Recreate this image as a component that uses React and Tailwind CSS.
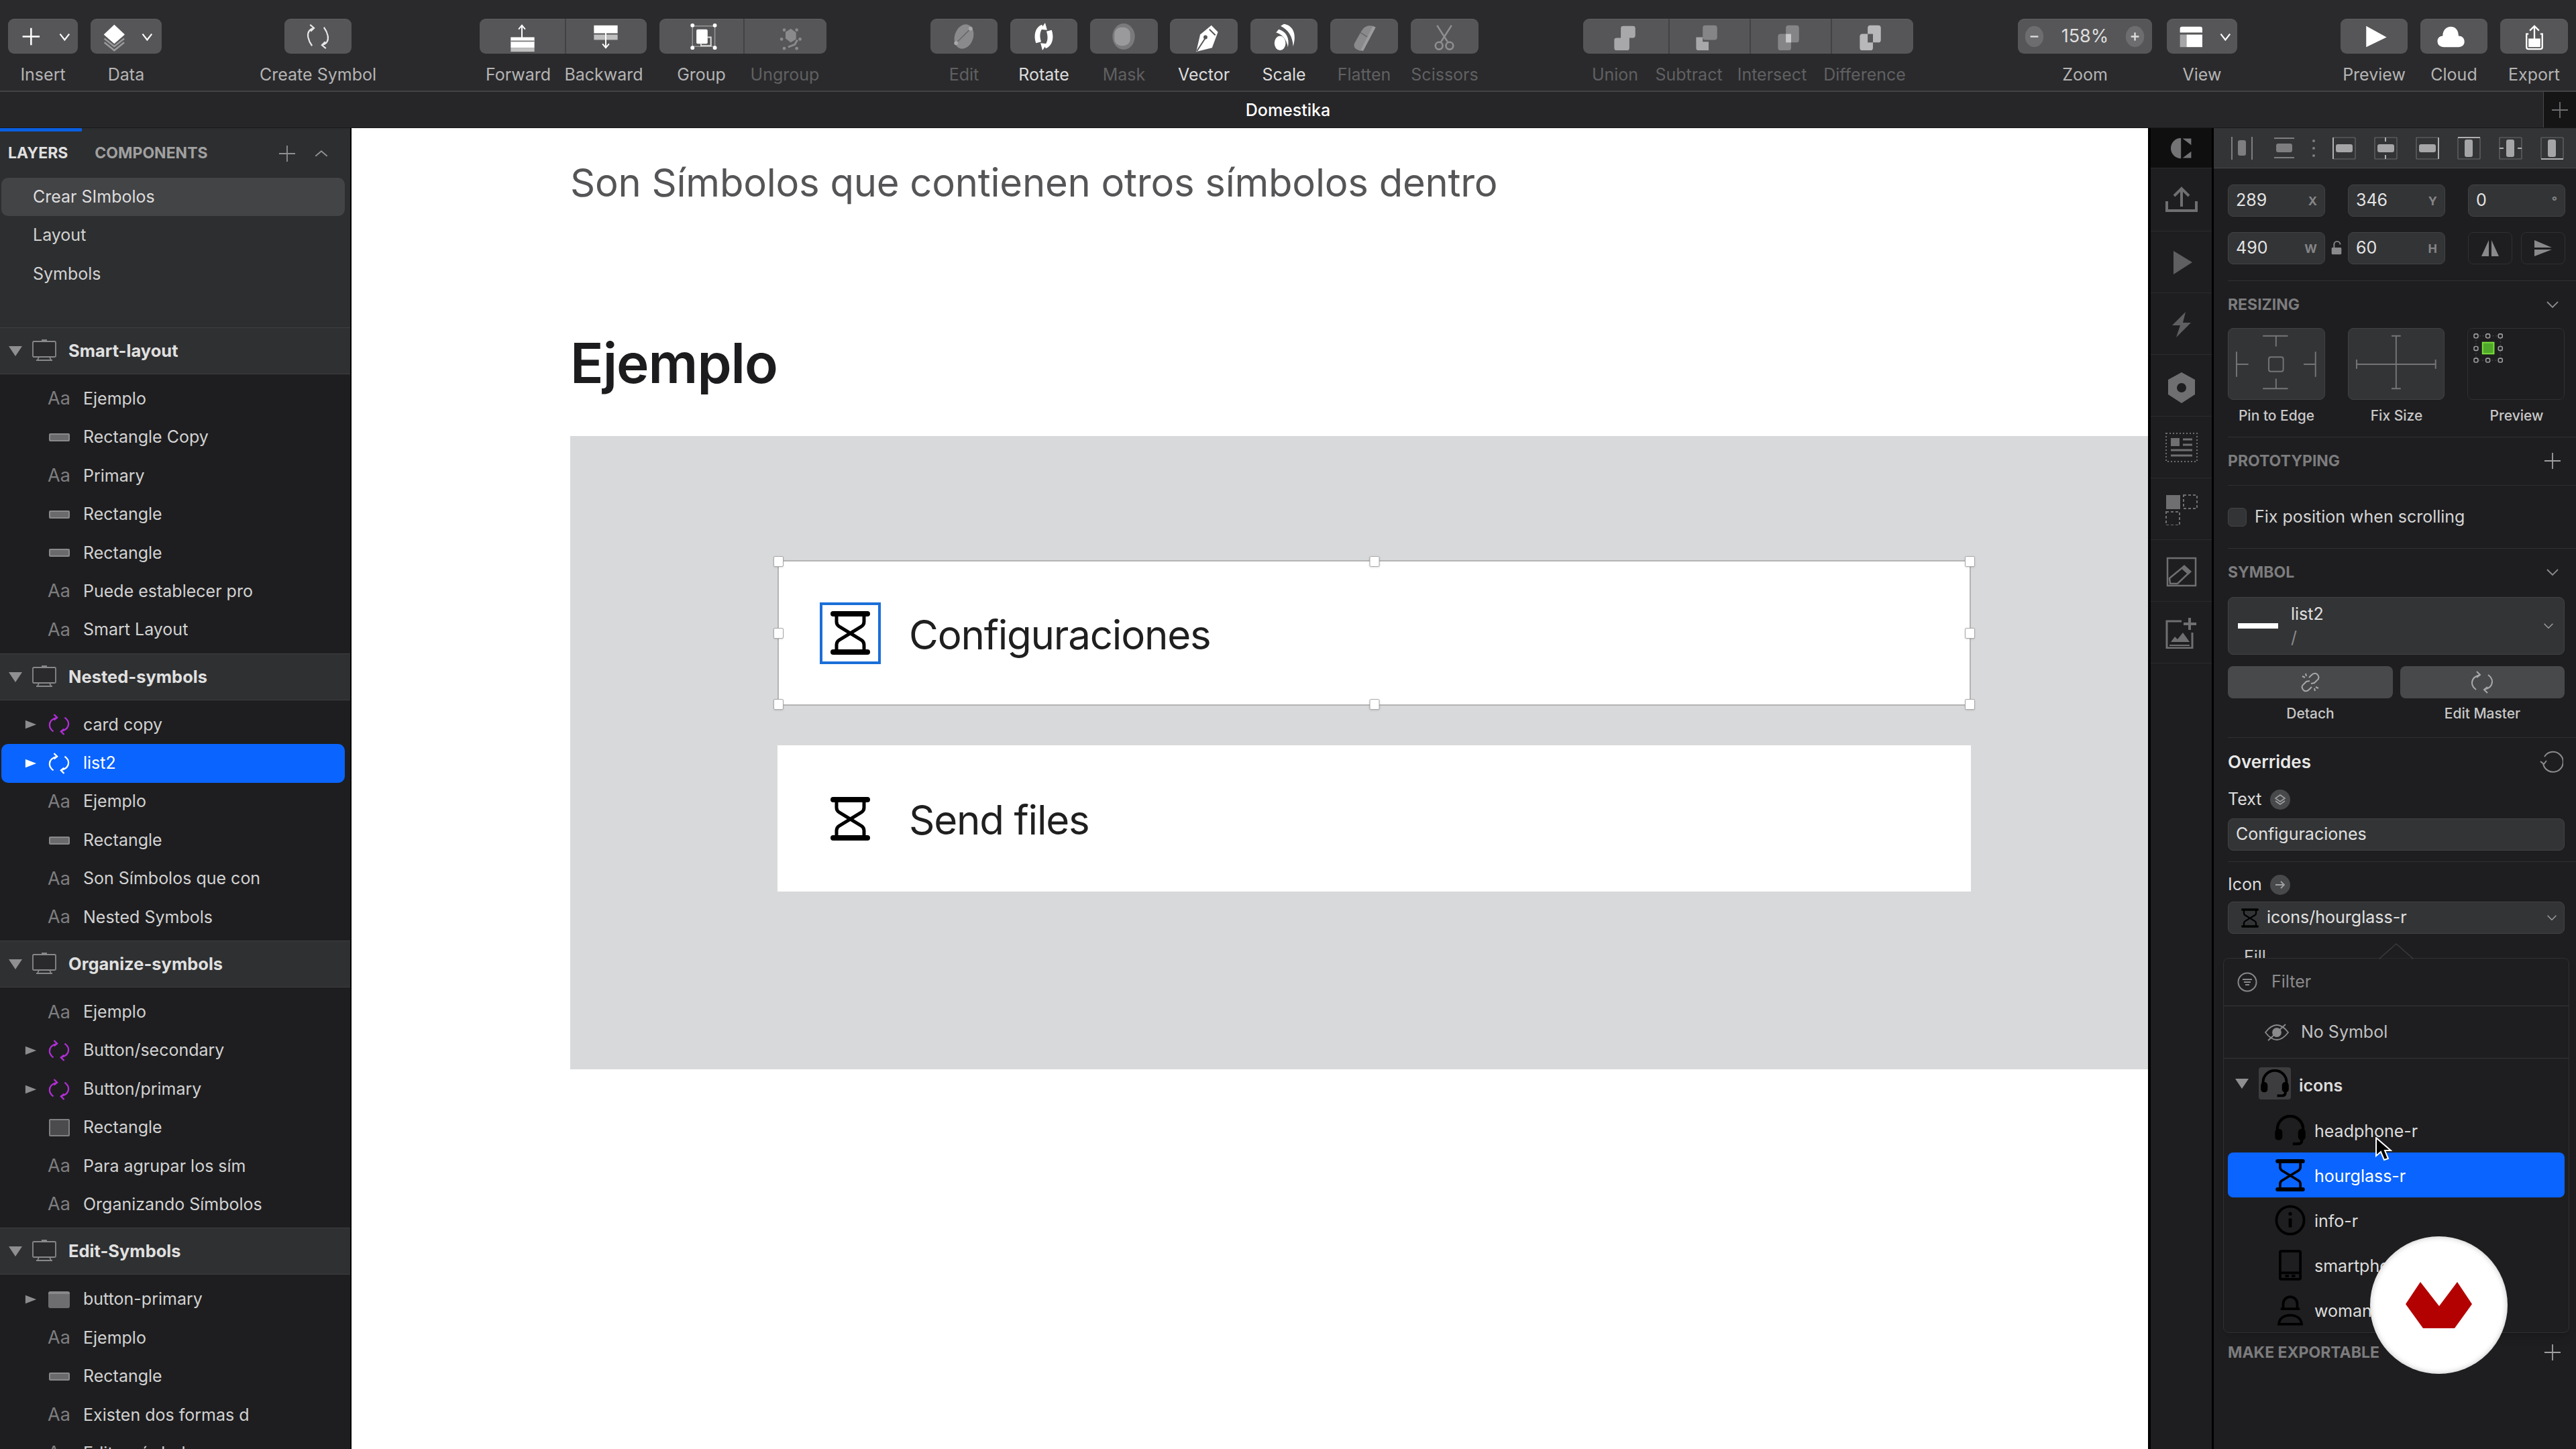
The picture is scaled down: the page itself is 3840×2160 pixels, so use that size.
import React from "react";

// ---------- drawings ----------
const Hourglass = ({ className = "" }) => (
  <svg viewBox="0 0 59 65" className={className}>
    <rect x="0" y="0" width="59" height="8" rx="4" fill="currentColor" />
    <rect x="0" y="57" width="59" height="8" rx="4" fill="currentColor" />
    <path d="M9 6v10c0 3 1 5 4 7l33 20c3 2 4 4 4 7v9M50 6v10c0 3-1 5-4 7L13 43c-3 2-4 4-4 7v9" fill="none" stroke="currentColor" strokeWidth="5" />
  </svg>
);

const Headphone = ({ className = "" }) => (
  <svg viewBox="0 0 48 48" className={className} fill="none" stroke="currentColor" strokeWidth="4.5">
    <path d="M4 30V22a20 20 0 0 1 40 0v8" />
    <rect x="2.5" y="24" width="7" height="13" rx="3" fill="currentColor" />
    <rect x="38.5" y="24" width="7" height="13" rx="3" fill="currentColor" />
    <path d="M42 37v3c0 4-3 5-6 5h-8" />
  </svg>
);

const InfoIcon = ({ className = "" }) => (
  <svg viewBox="0 0 48 48" className={className} fill="none" stroke="currentColor" strokeWidth="4">
    <circle cx="24" cy="24" r="21.5" />
    <path d="M24 21v14" strokeWidth="5" />
    <circle cx="24" cy="14" r="2.8" fill="currentColor" stroke="none" />
  </svg>
);

const PhoneIcon = ({ className = "" }) => (
  <svg viewBox="0 0 36 48" className={className} fill="none" stroke="currentColor" strokeWidth="4">
    <rect x="2" y="2" width="32" height="44" rx="2" />
    <path d="M2 36h32M10 41h6M20 41h6" />
  </svg>
);

const WomanIcon = ({ className = "" }) => (
  <svg viewBox="0 0 40 48" className={className} fill="none" stroke="currentColor" strokeWidth="4">
    <path d="M9 22V14a11 11 0 0 1 22 0v8" />
    <path d="M5 22h30" />
    <path d="M2 46c1-9 8-14 18-14s17 5 18 14z" />
  </svg>
);

const Chevron = ({ className = "", up = false }) => (
  <svg viewBox="0 0 20 12" className={className} fill="none" stroke="currentColor" strokeWidth="1.8">
    <path d={up ? "M2 10l8-7 8 7" : "M2 2l8 8 8-8"} />
  </svg>
);

const Plus = ({ className = "" }) => (
  <svg viewBox="0 0 26 26" className={className} fill="none" stroke="currentColor" strokeWidth="1.8">
    <path d="M13 1v24M1 13h24" />
  </svg>
);

const Triangle = ({ right = false, className = "" }) => (
  <svg viewBox="0 0 20 20" className={className} fill="currentColor">
    <path d={right ? "M1 3l18 7-18 7z" : "M0 3h20l-10 15z"} />
  </svg>
);

const SymbolArrows = ({ className = "", strokeWidth = 2.4 }) => (
  <svg viewBox="0 0 34 34" className={className} fill="none" stroke="currentColor" strokeWidth={strokeWidth}>
    <path d="M14 6C6 8 2 12 2 18c0 4 2 7 6 10" />
    <path d="M9 1l5 5-5 4" />
    <path d="M20 28c8-2 12-6 12-12 0-4-2-7-6-10" />
    <path d="M25 33l-5-5 5-4" />
  </svg>
);

const Monitor = ({ className = "" }) => (
  <svg viewBox="0 0 40 34" className={className} fill="none" stroke="currentColor" strokeWidth="1.8">
    <rect x="3" y="3" width="34" height="23" rx="1.5" fill="#2a2a2c" />
    <path d="M12 26l-2 5M28 26l2 5M8 31h24M16 1h8" />
  </svg>
);

const AlignIcon = ({ kind, className = "" }) => {
  const c = "#7e7e80";
  const box = <rect x="1" y="1" width="33" height="32" rx="1" fill="none" stroke="#6a6a6c" strokeWidth="1.2" />;
  if (kind === "h") return (
    <svg viewBox="0 0 34 34" className={`h-[34px] w-[34px] ${className}`}><path d="M2 0v34M32 0v34" stroke={c} strokeWidth="2" /><rect x="11" y="5" width="12" height="23" rx="3" fill={c} /></svg>
  );
  if (kind === "v") return (
    <svg viewBox="0 0 34 34" className={`h-[34px] w-[34px] ${className}`}><path d="M2 2h30M2 31h30" stroke={c} strokeWidth="2" /><rect x="5" y="10" width="24" height="13" rx="3" fill={c} /></svg>
  );
  if (kind === "dots") return (
    <svg viewBox="0 0 8 34" className={`h-[34px] w-[8px] ${className}`}><circle cx="4" cy="6" r="2" fill={c} /><circle cx="4" cy="17" r="2" fill={c} /><circle cx="4" cy="28" r="2" fill={c} /></svg>
  );
  const horiz = ["top", "mid", "bottom"].includes(kind);
  const bar = horiz ? <rect x="5" y="11" width="25" height="12" rx="3" fill="#a5a5a7" /> : <rect x="11" y="4" width="12" height="26" rx="3" fill="#a5a5a7" />;
  const edge = { top: "M1 1v32", bottom: "M34 1v32" };
  const e = kind === "mid" ? "M17 1v6M17 27v6" : kind === "center" ? "M1 17h6M28 17h6" : kind === "vtop" ? "M1 1h33" : kind === "vbottom" ? "M1 33h33" : edge[kind];
  return (
    <svg viewBox="0 0 35 34" className="h-[34px] w-[35px]">
      {box}
      {bar}
      <path d={e} stroke="#b0b0b2" strokeWidth="2" fill="none" />
    </svg>
  );
};

const toolIcons = {
  insert: (
    <>
      <path d="M34 13v26M21 26h26" stroke="#fff" strokeWidth="2.6" fill="none" />
      <path d="M78 22l7 9 7-9" stroke="#fff" strokeWidth="2.2" fill="none" />
    </>
  ),
  data: (
    <>
      <path d="M35 8l16 15-16 14-16-14z" fill="#fff" />
      <path d="M20 29l15 12 15-12M20 35l15 12 15-12" stroke="#9a9a9c" strokeWidth="2.6" fill="none" />
      <path d="M78 22l7 9 7-9" stroke="#fff" strokeWidth="2.2" fill="none" />
    </>
  ),
  symbol: (
    <g stroke="#e8e8e8" strokeWidth="2.2" fill="none">
      <path d="M44 13c-8 2-10 8-9 14 1 5 3 9 6 13M38 8l6 5-5 5" />
      <path d="M56 39c8-2 10-8 9-14-1-5-3-9-6-13M62 44l-6-5 5-5" />
    </g>
  ),
  forward: (
    <>
      <path d="M63 34V10M58 15l5-6 5 6" stroke="#fff" strokeWidth="2" fill="none" />
      <rect x="46" y="27" width="36" height="16" fill="#fff" />
      <rect x="46" y="43" width="36" height="6" fill="#c0c0c0" />
      <path d="M46 33h36" stroke="#777" strokeWidth="2" />
    </>
  ),
  backward: (
    <>
      <rect x="42" y="9" width="36" height="12" fill="#fff" />
      <rect x="42" y="23" width="36" height="8" fill="#c0c0c0" />
      <path d="M60 18v24M55 37l5 6 5-6" stroke="#fff" strokeWidth="2" fill="none" />
    </>
  ),
  group: (
    <>
      <rect x="49" y="10" width="34" height="31" fill="none" stroke="#999" strokeWidth="1.5" />
      <rect x="55" y="15" width="17" height="22" rx="2" fill="#fff" />
      <path d="M72 27h5v13H62v-3" stroke="#ddd" strokeWidth="2" fill="none" />
      {[[49, 9], [83, 9], [49, 43], [83, 43]].map(([x, y]) => <circle key={`${x}-${y}`} cx={x} cy={y} r="3" fill="#fff" />)}
    </>
  ),
  ungroup: (
    <>
      <path d="M62 19l8-5 8 6v10l-8 5-8-6z" fill="#8a8a8c" />
      {[[60, 16], [79, 16], [56, 30], [84, 30], [60, 44], [79, 44]].map(([x, y]) => <circle key={`${x}-${y}`} cx={x} cy={y} r="2.4" fill="#8a8a8c" />)}
      <path d="M66 42l10-4 4-7" stroke="#8a8a8c" strokeWidth="3" fill="none" />
    </>
  ),
  edit: (
    <>
      <ellipse cx="50" cy="26" rx="14" ry="19" fill="#8a8a8c" transform="rotate(20 50 26)" />
      <path d="M38 36l22-22" stroke="#666" strokeWidth="1.5" />
      <circle cx="60" cy="14" r="3" fill="#a8a8aa" />
      <circle cx="38" cy="36" r="3" fill="#a8a8aa" />
    </>
  ),
  rotate: (
    <>
      <path d="M47 8c-10 4-13 16-9 28l8-2c-3-9-2-16 3-22z" fill="#fff" />
      <path d="M53 44c10-4 13-16 9-28l-8 2c3 9 2 16-3 22z" fill="#fff" />
      <path d="M52 5l3 11-10-1zM48 47l-3-11 10 1z" fill="#fff" />
    </>
  ),
  mask: (
    <>
      <ellipse cx="50" cy="26" rx="17" ry="20" fill="#7a7a7c" />
      <rect x="36" y="12" width="24" height="28" rx="10" fill="#9a9a9c" />
    </>
  ),
  vector: (
    <>
      <path d="M62 9l10 10-9 24-24 6 6-26z" fill="#fff" />
      <path d="M40 48l13-20" stroke="#555" strokeWidth="2" />
      <circle cx="53" cy="27" r="3" fill="#555" />
      <path d="M59 15l9 9" stroke="#555" strokeWidth="2" />
    </>
  ),
  scale: (
    <>
      <path d="M50 7c13 2 20 14 14 34-1-15-7-25-19-31z" fill="#fff" />
      <path d="M42 15c11 3 17 13 14 27-2-11-8-19-18-22z" fill="#fff" />
      <ellipse cx="44" cy="36" rx="8.5" ry="11" fill="#fff" />
    </>
  ),
  flatten: (
    <>
      <path d="M64 10c-9-2-14 1-19 10l-9 16c-2 5 0 8 4 10l5 2 19-33z" fill="#8a8a8c" />
      <path d="M45 20l14 9" stroke="#666" strokeWidth="1.5" />
      <path d="M64 10l4 2-19 36-4-1z" fill="#9c9c9e" />
    </>
  ),
  scissors: (
    <g stroke="#8f8f91" strokeWidth="2.6" fill="none">
      <path d="M39 9l16 25M61 9L45 34" />
      <circle cx="42" cy="40" r="5.5" />
      <circle cx="58" cy="40" r="5.5" />
    </g>
  ),
  union: <path d="M60 10h14c3 0 4 1 4 4v10c0 3-1 4-4 4h-5v15c0 3-1 4-4 4H50c-3 0-4-1-4-4V32c0-3 1-4 4-4h6V14c0-3 1-4 4-4z" fill="#a8a8aa" />,
  subtract: (
    <>
      <rect x="50" y="9" width="22" height="22" rx="4" fill="#858587" />
      <path d="M40 27h10v7h9v13H44c-3 0-4-1-4-4z" fill="#a8a8aa" />
    </>
  ),
  intersect: (
    <>
      <rect x="53" y="9" width="20" height="26" rx="4" fill="#858587" />
      <rect x="41" y="22" width="20" height="25" rx="4" fill="#858587" />
      <rect x="53" y="22" width="8" height="13" fill="#c8c8ca" />
    </>
  ),
  difference: (
    <>
      <rect x="54" y="9" width="20" height="26" rx="4" fill="#b8b8ba" />
      <rect x="42" y="22" width="20" height="25" rx="4" fill="#b8b8ba" />
      <rect x="54" y="22" width="8" height="13" fill="#58585a" />
    </>
  ),
  zoom: (
    <>
      <ellipse cx="23" cy="26" rx="14" ry="16" fill="#6d6d6f" />
      <ellipse cx="176" cy="26" rx="14" ry="16" fill="#6d6d6f" />
      <path d="M17 26h12" stroke="#ddd" strokeWidth="2.4" />
      <path d="M170 26h12M176 20v12" stroke="#ddd" strokeWidth="2.4" />
    </>
  ),
  view: (
    <>
      <path d="M19 14c0-2 1-3 3-3h28c2 0 3 1 3 3v6H19z" fill="#fff" />
      <rect x="19" y="23" width="10" height="19" fill="#a5a5a7" />
      <rect x="29" y="23" width="24" height="19" fill="#fff" />
      <path d="M81 22l7 9 7-9" stroke="#fff" strokeWidth="2.2" fill="none" />
    </>
  ),
  preview: <path d="M38 10l31 17-31 15z" fill="#fff" />,
  cloud: <path d="M35 42c-6 0-10-3-10-9 0-5 4-8 8-8 0-9 6-14 12-14 8 0 12 6 12 14 5 0 9 3 9 9 0 5-4 8-9 8z" fill="#fff" />,
  export: (
    <g stroke="#fff" strokeWidth="2.4" fill="none">
      <path d="M51 35V10M44 17l7-7 7 7" />
      <path d="M42 22h-3v20c0 2 1 3 3 3h18c2 0 3-1 3-3V22h-3" />
      <rect x="42" y="29" width="18" height="13" fill="#fff" stroke="none" />
    </g>
  ),
};

// ---------- toolbar ----------
const toolGroups = [
  { ml: "ml-[12px]", items: [{ w: "w-[104px]", label: "Insert", icon: "insert" }] },
  { ml: "ml-[19px]", items: [{ w: "w-[106px]", label: "Data", icon: "data" }] },
  { ml: "ml-[183px]", items: [{ w: "w-[100px]", label: "Create Symbol", icon: "symbol" }] },
  { ml: "ml-[191px]", items: [{ w: "w-[127px]", label: "Forward", icon: "forward", shift: "mr-[12px]" }, { w: "w-[122px]", label: "Backward", icon: "backward", shift: "mr-[6px]" }] },
  { ml: "ml-[19px]", items: [{ w: "w-[125px]", label: "Group", icon: "group" }, { w: "w-[124px]", label: "Ungroup", icon: "ungroup", off: true }] },
  { ml: "ml-[155px]", items: [{ w: "w-[100px]", label: "Edit", icon: "edit", off: true }] },
  { ml: "ml-[19px]", items: [{ w: "w-[100px]", label: "Rotate", icon: "rotate", on: true }] },
  { ml: "ml-[19px]", items: [{ w: "w-[101px]", label: "Mask", icon: "mask", off: true }] },
  { ml: "ml-[18px]", items: [{ w: "w-[101px]", label: "Vector", icon: "vector", on: true }] },
  { ml: "ml-[19px]", items: [{ w: "w-[100px]", label: "Scale", icon: "scale", on: true }] },
  { ml: "ml-[19px]", items: [{ w: "w-[101px]", label: "Flatten", icon: "flatten", off: true }] },
  { ml: "ml-[19px]", items: [{ w: "w-[101px]", label: "Scissors", icon: "scissors", off: true }] },
  {
    ml: "ml-[156px]",
    items: [
      { w: "w-[127px]", label: "Union", icon: "union", off: true, shift: "mr-[32px]" },
      { w: "w-[121px]", label: "Subtract", icon: "subtract", off: true, shift: "mr-[60px]" },
      { w: "w-[121px]", label: "Intersect", icon: "intersect", off: true, shift: "mr-[54px]" },
      { w: "w-[123px]", label: "Difference", icon: "difference", off: true, shift: "mr-[22px]" },
    ],
  },
  { ml: "ml-[156px]", items: [{ w: "w-[200px]", label: "Zoom", icon: "zoom", text: "158%" }] },
  { ml: "ml-[22px]", items: [{ w: "w-[105px]", label: "View", icon: "view" }] },
  { ml: "ml-[154px]", items: [{ w: "w-[100px]", label: "Preview", icon: "preview" }] },
  { ml: "ml-[19px]", items: [{ w: "w-[100px]", label: "Cloud", icon: "cloud" }] },
  { ml: "ml-[19px]", items: [{ w: "w-[101px]", label: "Export", icon: "export" }] },
];

function Toolbar() {
  return (
    <div className="h-[135px] shrink-0 flex items-start bg-[#2a2a2c] pt-[28px]">
      {toolGroups.map((g) => (
        <div key={g.items[0].label} className={`flex ${g.ml}`}>
          {g.items.map((t, i) => (
            <div key={t.label} className={`${t.w} flex flex-col items-center`}>
              <div
                className={`relative w-full h-[52px] bg-[#565658] border-t border-[#616163] ${i === 0 ? "rounded-l-[9px]" : "border-l-2 border-l-[#424244]"} ${i === g.items.length - 1 ? "rounded-r-[9px]" : ""}`}
              >
                <svg viewBox={`0 0 ${parseInt(t.w.slice(3))} 52`} className="h-full w-full">{toolIcons[t.icon]}</svg>
                {t.text && (
                  <span className="absolute inset-0 flex items-center justify-center text-[27px] text-[#dedede]">{t.text}</span>
                )}
              </div>
              <span className={`mt-[17px] whitespace-nowrap text-[25px] leading-[28px] ${t.shift || ""} ${t.off ? "text-[#606062]" : t.on ? "text-[#dcdcdc]" : "text-[#b4b4b4]"}`}>
                {t.label}
              </span>
            </div>
          ))}
        </div>
      ))}
    </div>
  );
}

// ---------- layers list ----------
const layerSections = [
  {
    name: "Smart-layout",
    rows: [
      ["text", "Ejemplo"], ["rect", "Rectangle Copy"], ["text", "Primary"], ["rect", "Rectangle"], ["rect", "Rectangle"], ["text", "Puede establecer pro"], ["text", "Smart Layout"],
    ],
  },
  {
    name: "Nested-symbols",
    rows: [
      ["symbol", "card copy"], ["selected", "list2"], ["text", "Ejemplo"], ["rect", "Rectangle"], ["text", "Son Símbolos que con"], ["text", "Nested Symbols"],
    ],
  },
  {
    name: "Organize-symbols",
    rows: [
      ["text", "Ejemplo"], ["symbol", "Button/secondary"], ["symbol", "Button/primary"], ["square", "Rectangle"], ["text", "Para agrupar los sím"], ["text", "Organizando Símbolos"],
    ],
  },
  {
    name: "Edit-Symbols",
    rows: [
      ["folder", "button-primary"], ["text", "Ejemplo"], ["rect", "Rectangle"], ["text", "Existen dos formas d"], ["text", "Editar símbolos"],
    ],
  },
];

function LayerRow({ kind, name }) {
  const selected = kind === "selected";
  const hasArrow = ["symbol", "selected", "folder"].includes(kind);
  return (
    <div className={`flex items-center h-[57.4px] text-[25px] ${selected ? "text-white" : "text-[#d2d2d2]"}`}>
      <div className={`flex items-center h-full w-[512px] ml-[2px] rounded-[10px] ${selected ? "bg-[#0a64ff]" : ""}`}>
        <div className="w-[70px] flex justify-end pr-[17px]">
          {hasArrow && <Triangle right className={`h-[18px] w-[18px] ${selected ? "text-white" : "text-[#8c8c8e]"}`} />}
        </div>
        <div className="w-[32px] flex justify-center">
          {kind === "text" && <span className="text-[27px] text-[#7e7e80]">Aa</span>}
          {kind === "rect" && <span className="block w-[31px] h-[12px] bg-[#6a6a6c] border-2 border-[#8a8a8c] rounded-[2px]" />}
          {kind === "square" && <span className="block w-[31px] h-[26px] bg-[#4b4b4d] border-2 border-[#808082] rounded-[2px]" />}
          {kind === "folder" && <span className="block w-[35px] h-[25px] bg-[#6e6e70] rounded-[3px] border-t-4 border-[#88888a]" />}
          {(kind === "symbol" || selected) && <SymbolArrows className={`h-[32px] w-[32px] ${selected ? "text-white" : "text-[#b12fd6]"}`} />}
        </div>
        <span className="ml-[20px] whitespace-nowrap">{name}</span>
      </div>
    </div>
  );
}

function LeftPanel() {
  return (
    <aside className="w-[524px] shrink-0 border-r-2 border-black bg-[#2d2e30] overflow-hidden">
      <div className="h-[5px] w-[122px] bg-[#0a5fe0]" />
      <div className="flex items-center h-[69px] pl-[12px] pr-[32px] pb-[4px] text-[23px] font-bold">
        <span className="text-[#e0e0e0]">LAYERS</span>
        <span className="ml-[40px] text-[#a0a0a0]">COMPONENTS</span>
        <Plus className="ml-auto h-[26px] w-[26px] text-[#909092]" />
        <Chevron up className="ml-[27px] h-[13px] w-[22px] text-[#909092]" />
      </div>
      <div className="h-[57px] mx-[2px] w-[512px] rounded-[10px] bg-[#434446] flex items-center pl-[47px] text-[25px] text-[#dddddd]">Crear SImbolos</div>
      <div className="h-[57.5px] flex items-center pl-[49px] text-[25px] text-[#d2d2d2]">Layout</div>
      <div className="h-[57.5px] flex items-center pl-[49px] text-[25px] text-[#d2d2d2]">Symbols</div>
      <div className="h-[51px]" />
      {layerSections.map((s) => (
        <section key={s.name}>
          <div className="h-[70px] flex items-center bg-[#2f3032] border-y border-[#3e3e40] pl-[13px] text-[25.5px] font-bold text-[#e0e0e0]">
            <Triangle className="h-[20px] w-[20px] text-[#8f8f91]" />
            <Monitor className="ml-[13px] h-[34px] w-[40px] text-[#88888a]" />
            <span className="ml-[16px]">{s.name}</span>
          </div>
          <div className="bg-[#1e1e20] pt-[8px] pb-[6px]">
            {s.rows.map(([kind, name], i) => (
              <LayerRow key={`${name}-${i}`} kind={kind} name={name} />
            ))}
          </div>
        </section>
      ))}
    </aside>
  );
}

// ---------- canvas ----------
const handles = [
  "left-[-8px] top-[-8px]", "left-1/2 -translate-x-1/2 top-[-8px]", "right-[-8px] top-[-8px]",
  "left-[-8px] top-1/2 -translate-y-1/2", "right-[-8px] top-1/2 -translate-y-1/2",
  "left-[-8px] bottom-[-8px]", "left-1/2 -translate-x-1/2 bottom-[-8px]", "right-[-8px] bottom-[-8px]",
];

function Canvas() {
  return (
    <main className="flex-1 min-w-0 bg-white overflow-hidden pt-[41px] pl-[326px]">
      <p className="h-[80px] flex items-center whitespace-nowrap text-[58px] tracking-[-0.25px] text-[#555557]">Son Símbolos que contienen otros símbolos dentro</p>
      <h1 className="mt-[179px] h-[100px] flex items-center text-[82px] font-semibold tracking-[-1px] text-[#1c1c1e]">Ejemplo</h1>
      <div className="mt-[59px] h-[944px] w-[2352px] bg-[#d8d9db] pl-[309px] pt-[185px]">
        <div className="relative h-[217px] w-[1779px] bg-white border-2 border-[#b4b4b4] flex items-center pl-[61px]">
          <div className="h-[92px] w-[91px] border-4 border-[#1a6fd8] flex items-center justify-center">
            <Hourglass className="h-[65px] w-[59px] text-black" />
          </div>
          <span className="ml-[42px] pt-[4px] text-[60px] tracking-[-1.2px] text-[#1f1f1f]">Configuraciones</span>
          {handles.map((h) => (
            <span key={h} className={`absolute ${h} h-[16px] w-[15px] rounded-[2px] bg-white border border-[#a8a8a8] shadow-sm`} />
          ))}
        </div>
        <div className="mt-[59px] h-[218px] w-[1779px] bg-white flex items-center pl-[79px]">
          <Hourglass className="h-[65px] w-[59px] text-black" />
          <span className="ml-[58px] pt-[4px] text-[60px] tracking-[-1.2px] text-[#1f1f1f]">Send files</span>
        </div>
      </div>
    </main>
  );
}

// ---------- inspector strip ----------
const stripIcons = [
  <g key="up" fill="none" stroke="#6f6f71" strokeWidth="4"><path d="M2 22v14h44V22M24 30V5M13 14L24 3l11 11" /></g>,
  <path key="play" d="M12 3l28 17-28 18z" fill="#5f5f61" />,
  <path key="bolt" d="M30 2L10 22h12l-6 18 22-22H26z" fill="#5f5f61" />,
  <g key="hex"><path d="M24 0l20 11v22L24 46 4 33V11z" fill="#6f6f71" /><circle cx="24" cy="23" r="7" fill="#1e1e20" /></g>,
  <g key="list"><rect x="1" y="1" width="46" height="42" fill="none" stroke="#6f6f71" strokeWidth="2" strokeDasharray="2 3" /><rect x="8" y="8" width="13" height="12" fill="#6f6f71" /><path d="M26 10h14M26 18h14M8 26h32M8 34h32" stroke="#6f6f71" strokeWidth="3" /></g>,
  <g key="grid"><rect x="1" y="1" width="21" height="21" fill="#6f6f71" /><rect x="27" y="1" width="20" height="20" fill="none" stroke="#6f6f71" strokeWidth="2" strokeDasharray="4 3" /><rect x="1" y="26" width="20" height="20" fill="none" stroke="#6f6f71" strokeWidth="2" strokeDasharray="4 3" /></g>,
  <g key="edit" fill="none" stroke="#6f6f71" strokeWidth="2.5"><rect x="3" y="3" width="42" height="41" /><path d="M6 33L28 15l9 8-19 18H7z" /><path d="M28 15l9 8 -3 3-9-8z" fill="#6f6f71" /></g>,
  <g key="image" fill="none" stroke="#6f6f71" strokeWidth="3"><path d="M24 5H2v40h38V22" /><path d="M8 36l6-8 4 4 8-10 10 14z" fill="#6f6f71" stroke="none" /><path d="M6 41h30" strokeWidth="2" /><path d="M36 0v18M27 9h19" strokeWidth="4" /></g>,
];

function Strip() {
  return (
    <div className="w-[98px] shrink-0 border-l-4 border-r-[3px] border-black bg-[#1e1e20] flex flex-col">
      <div className="h-[59px] shrink-0 bg-[#0f0f10] flex items-center justify-center">
        <svg viewBox="0 0 40 40" className="h-[32px] w-[34px]">
          <path d="M19 1a19 19 0 0 0 0 38z" fill="#737375" />
          <path d="M22 2h16v12zM38 26v12H22z" fill="#737375" />
        </svg>
      </div>
      {stripIcons.map((icon, i) => (
        <div key={i} className={`${i === 0 ? "h-[94px]" : "h-[92px]"} ${i < 4 ? "pt-[7px]" : "pt-[2px]"} shrink-0 flex items-center justify-center border-t border-[#2b2b2d]`}>
          <svg viewBox="0 0 48 46" className="h-[46px] w-[48px]">{icon}</svg>
        </div>
      ))}
      <div className="border-t border-[#2b2b2d]" />
    </div>
  );
}

// ---------- right panel ----------
const SectionHead = ({ title, action = "chevron" }) => (
  <div className="h-[70px] flex items-center justify-between">
    <span className="text-[23px] font-bold text-[#7c7c7e]">{title}</span>
    {action === "chevron" ? (
      <Chevron className="mr-[7px] h-[12px] w-[22px] text-[#8c8c8e]" />
    ) : (
      <Plus className="mr-[5px] h-[26px] w-[26px] text-[#a0a0a2]" />
    )}
  </div>
);

const Field = ({ value, tag }) => (
  <div className="h-[48px] w-[145px] rounded-[8px] bg-[#333436] border border-[#424244] flex items-center justify-between pl-[11px] pr-[11px] text-[25px] text-[#e4e4e4]">
    <span>{value}</span>
    <span className="text-[18px] font-bold text-[#858587]">{tag}</span>
  </div>
);

const Label = ({ children, className = "" }) => (
  <span className={`h-[24px] flex items-center justify-center text-[21px] font-medium text-[#c8c8c8] ${className}`}>{children}</span>
);

function Inspector() {
  return (
    <aside className="relative w-[540px] shrink-0 bg-[#1e1e20] overflow-hidden">
      <div className="h-[60px] bg-[#333436] border-b border-[#48484a] flex items-center pl-[25px] gap-[27px]">
        <AlignIcon kind="h" />
        <AlignIcon kind="v" className="ml-[2px]" />
        <AlignIcon kind="dots" className="-ml-[4px] -mr-[3px]" />
        {["top", "mid", "bottom", "vtop", "center", "vbottom"].map((k) => <AlignIcon key={k} kind={k} />)}
      </div>

      <div className="pl-[21px] pr-[17px]">
        <div className="pt-[24px] pb-[24px] -mr-[17px] border-b border-[#303032]">
          <div className="flex gap-[34px]">
            <Field value="289" tag="X" />
            <Field value="346" tag="Y" />
            <Field value="0" tag="°" />
          </div>
          <div className="mt-[23px] flex items-center">
            <Field value="490" tag="W" />
            <svg viewBox="0 0 18 24" className="mx-[8px] h-[22px] w-[18px]">
              <path d="M5 11V6a5 5 0 0 1 10 0" fill="none" stroke="#8a8a8c" strokeWidth="2" />
              <rect x="1" y="11" width="16" height="11" rx="1.5" fill="#8a8a8c" />
            </svg>
            <Field value="60" tag="H" />
            <div className="ml-[34px] h-[48px] w-[66px] rounded-[8px] border border-[#303032] flex items-center justify-center">
              <svg viewBox="0 0 28 26" className="h-[26px] w-[28px]"><path d="M12 1v24H1zM16 1v24h11z" fill="#8a8a8c" /></svg>
            </div>
            <div className="ml-[13px] h-[48px] w-[66px] rounded-[8px] border border-[#303032] flex items-center justify-center">
              <svg viewBox="0 0 28 26" className="h-[26px] w-[28px]"><path d="M1 1l26 11H1zM1 15h26L1 25z" fill="#8a8a8c" /></svg>
            </div>
          </div>
        </div>

        <SectionHead title="RESIZING" />
        <div className="flex gap-[34px]">
          <div className="h-[107px] w-[145px] rounded-[8px] bg-[#333436] border border-[#424244]">
            <svg viewBox="0 0 145 107" className="h-full w-full" fill="none" stroke="#757577" strokeWidth="2">
              <path d="M52 11h38M72 11v16M52 91h38M72 91V76M12 35v38M12 54h18M132 35v38M132 54h-18" />
              <rect x="61" y="43" width="22" height="22" rx="3" />
            </svg>
          </div>
          <div className="h-[107px] w-[145px] rounded-[8px] bg-[#333436] border border-[#424244]">
            <svg viewBox="0 0 145 107" className="h-full w-full" fill="none" stroke="#757577" strokeWidth="2">
              <path d="M72 11v80M65 11h14M65 91h14M12 54h120M12 47v14M132 47v14" />
            </svg>
          </div>
          <div className="h-[107px] w-[145px] rounded-[8px] border border-[#303032]">
            <svg viewBox="0 0 145 107" className="h-full w-full">
              <rect x="12" y="11" width="37" height="37" fill="none" stroke="#555" strokeDasharray="2 3" />
              <rect x="22" y="21" width="17" height="17" fill="#4fa82a" stroke="#7be03c" strokeWidth="2" />
              {[[12, 11], [30, 11], [49, 11], [12, 30], [49, 30], [12, 48], [30, 48], [49, 48]].map(([x, y]) => (
                <rect key={`${x}-${y}`} x={x - 3} y={y - 3} width="6" height="6" rx="2" fill="#1e1e20" stroke="#a0a0a0" strokeWidth="1.6" />
              ))}
            </svg>
          </div>
        </div>
        <div className="mt-[12px] pb-[19px] -mr-[17px] border-b border-[#303032] flex gap-[34px]">
          <Label className="w-[145px]">Pin to Edge</Label>
          <Label className="w-[145px]">Fix Size</Label>
          <Label className="w-[145px]">Preview</Label>
        </div>

        <SectionHead title="PROTOTYPING" action="plus" />
        <div className="-mr-[17px] border-t border-[#303032] mt-[1px] h-[95px] flex items-center border-b">
          <span className="h-[28px] w-[28px] rounded-[6px] bg-[#333436] border border-[#424244]" />
          <span className="ml-[12px] text-[25px] text-[#d4d4d4]">Fix position when scrolling</span>
        </div>

        <SectionHead title="SYMBOL" />
        <div className="mt-[2px] h-[86px] rounded-[8px] bg-[#333436] border border-[#424244] flex items-center pl-[14px] pr-[15px]">
          <div className="h-[8px] w-[60px] bg-white" />
          <div className="ml-[19px] flex-1 flex flex-col text-[25px] leading-[35px]">
            <span className="text-[#e0e0e0]">list2</span>
            <span className="text-[#8a8a8c]">/</span>
          </div>
          <Chevron className="h-[10px] w-[16px] text-[#a0a0a2]" />
        </div>
        <div className="mt-[17px] flex gap-[11px]">
          <div className="h-[48px] flex-1 rounded-[8px] bg-[#48494b] flex items-center justify-center">
            <svg viewBox="0 0 30 30" className="h-[30px] w-[30px]" fill="none" stroke="#a8a8aa" strokeWidth="2">
              <path d="M13 8l4-4c3-3 7-3 9 0s2 6-1 8l-4 4-5 1M17 22l-4 4c-3 3-7 3-9 0s-2-6 1-8l4-4 5-1" />
              <path d="M3 6l4 2M8 2l1 4M27 24l-4-2M22 28l-1-4" />
            </svg>
          </div>
          <div className="h-[48px] flex-1 rounded-[8px] bg-[#48494b] flex items-center justify-center">
            <SymbolArrows className="h-[34px] w-[34px] text-[#a8a8aa]" strokeWidth={2} />
          </div>
        </div>
        <div className="mt-[11px] flex gap-[11px] pb-[23px] border-b border-[#303032] -mr-[17px]">
          <Label className="w-[246px]">Detach</Label>
          <Label className="w-[245px]">Edit Master</Label>
        </div>

        <div className="h-[70px] flex items-center justify-between">
          <span className="text-[26px] font-semibold text-[#e8e8e8]">Overrides</span>
          <svg viewBox="0 0 36 34" className="mr-[2px] h-[34px] w-[36px]" fill="none" stroke="#8c8c8e" strokeWidth="2">
            <path d="M8 10a15 15 0 1 1-2 10M2 17l5 4 4-5" />
          </svg>
        </div>

        <div className="mt-[7px] h-[30px] flex items-center">
          <span className="text-[25px] text-[#dcdcdc]">Text</span>
          <span className="ml-[12px] h-[30px] w-[30px] rounded-full bg-[#48494b] flex items-center justify-center">
            <svg viewBox="0 0 20 20" className="h-[20px] w-[20px]" fill="none" stroke="#a0a0a2" strokeWidth="1.6">
              <path d="M10 3l7 5-7 5-7-5zM3 12l7 5 7-5" />
            </svg>
          </span>
        </div>
        <div className="mt-[13px] h-[48px] rounded-[8px] bg-[#333436] border border-[#424244] flex items-center pl-[11px] text-[25px] text-[#e0e0e0]">Configuraciones</div>
        <div className="mt-[16px] border-t border-[#303032] -mr-[17px]" />

        <div className="mt-[19px] h-[30px] flex items-center">
          <span className="text-[25px] text-[#dcdcdc]">Icon</span>
          <span className="ml-[12px] h-[30px] w-[30px] rounded-full bg-[#48494b] flex items-center justify-center">
            <svg viewBox="0 0 20 20" className="h-[20px] w-[20px]" fill="none" stroke="#a0a0a2" strokeWidth="1.8">
              <path d="M3 10h13M11 5l5 5-5 5" />
            </svg>
          </span>
        </div>
        <div className="mt-[10px] h-[48px] rounded-[8px] bg-[#333436] border border-[#424244] flex items-center pl-[19px] pr-[10px] text-[25px] text-[#e0e0e0]">
          <Hourglass className="h-[31px] w-[26px] text-black" />
          <span className="ml-[12px] flex-1">icons/hourglass-r</span>
          <Chevron className="h-[10px] w-[16px] text-[#a0a0a2]" />
        </div>
        <div className="mt-[16px] h-[30px] pl-[24px] text-[25px] text-[#c8c8c8]">Fill</div>

        <div className="mt-[543px]">
          <SectionHead title="MAKE EXPORTABLE" action="plus" />
        </div>
      </div>

      {/* symbol picker popover */}
      <div className="absolute left-[14px] top-[1237px] h-[559px] w-[516px]">
        <svg viewBox="0 0 50 24" className="absolute left-[233px] top-[-22px] h-[24px] w-[50px]">
          <path d="M0 23L25 1l25 22z" fill="#1e1e20" stroke="#3a3a3c" strokeWidth="1.5" />
          <path d="M2 23.5h46" stroke="#1e1e20" strokeWidth="2" />
        </svg>
        <div className="h-full w-full overflow-hidden rounded-[8px] bg-[#1e1e20] border border-[#303032] shadow-lg">
          <div className="h-[71px] flex items-center pl-[20px] border-b border-[#353537]">
            <svg viewBox="0 0 30 30" className="h-[30px] w-[30px]" fill="none" stroke="#88888a" strokeWidth="2">
              <circle cx="15" cy="15" r="13.5" />
              <path d="M8 11h14M10 15h10M12 19h6" />
            </svg>
            <span className="ml-[21px] text-[25px] text-[#8a8a8c]">Filter</span>
          </div>
          <div className="h-[78px] flex items-center pl-[61px] border-b border-[#353537]">
            <svg viewBox="0 0 36 26" className="h-[26px] w-[36px]" fill="none" stroke="#8a8a8c" strokeWidth="1.8">
              <path d="M1 13C7 5 12 2 18 2s11 3 17 11c-6 8-11 11-17 11S7 21 1 13z" />
              <circle cx="18" cy="13" r="6" fill="#8a8a8c" />
              <path d="M5 25L31 1" />
            </svg>
            <span className="ml-[18px] text-[25px] text-[#c0c0c0]">No Symbol</span>
          </div>
          <div className="h-[73px] flex items-center pl-[17px]">
            <Triangle className="h-[20px] w-[20px] text-[#8f8f91]" />
            <div className="ml-[15px] h-[48px] w-[48px] rounded-[4px] bg-[#3d3d3f] flex items-center justify-center">
              <Headphone className="h-[42px] w-[42px] text-black" />
            </div>
            <span className="ml-[12px] pt-[8px] text-[25px] font-semibold text-[#dcdcdc]">icons</span>
          </div>
          {[
            ["headphone-r", <Headphone key="a" className="h-[46px] w-[46px] text-black" />],
            ["hourglass-r", <Hourglass key="b" className="h-[48px] w-[44px] text-black" />],
            ["info-r", <InfoIcon key="c" className="h-[46px] w-[46px] text-black" />],
            ["smartphone-r", <PhoneIcon key="d" className="h-[48px] w-[34px] text-black" />],
            ["woman-r", <WomanIcon key="e" className="h-[48px] w-[38px] text-black" />],
          ].map(([name, icon]) => (
            <div
              key={name}
              className={`mx-[6px] h-[67px] flex items-center rounded-[8px] ${name === "hourglass-r" ? "bg-[#0a64ff] text-white" : "text-[#dcdcdc]"}`}
            >
              <div className="ml-[70px] w-[46px] flex justify-center">{icon}</div>
              <span className="ml-[13px] pt-[5px] text-[25px]">{name}</span>
            </div>
          ))}
        </div>
      </div>

      {/* pointer */}
      <svg viewBox="0 0 26 36" className="absolute left-[240px] top-[1504px] h-[36px] w-[26px]">
        <path d="M2 1v27l7-6 5 12 6-2-5-12h9z" fill="#000" stroke="#fff" strokeWidth="2" />
      </svg>

      {/* watermark badge */}
      <div className="absolute left-[233px] top-[1652px] h-[205px] w-[205px] rounded-full bg-white shadow-[inset_0_0_8px_rgba(0,0,0,0.25)] flex items-center justify-center">
        <svg viewBox="0 0 99 69" className="h-[69px] w-[99px]">
          <path d="M22 0l28 36L77 0l22 33-26 36H26L0 33z" fill="#b30000" />
        </svg>
      </div>
    </aside>
  );
}

export default function App() {
  return (
    <div className="w-[3840px] h-[2160px] overflow-hidden flex flex-col bg-[#1e1e20] font-['Inter',sans-serif]">
      <Toolbar />
      <div className="h-[2px] shrink-0 bg-[#434345]" />
      <div className="relative h-[54px] shrink-0 bg-[#262628] flex items-center justify-center pt-[2px] text-[25px] font-medium text-white border-b border-[#18181a]">
        Domestika
        <div className="absolute right-0 top-0 h-full w-[49px] bg-[#151516] border-l border-[#48484a] flex items-center justify-center">
          <Plus className="h-[26px] w-[26px] text-[#6f6f71]" />
        </div>
      </div>
      <div className="flex flex-1 min-h-0">
        <LeftPanel />
        <Canvas />
        <Strip />
        <Inspector />
      </div>
    </div>
  );
}
